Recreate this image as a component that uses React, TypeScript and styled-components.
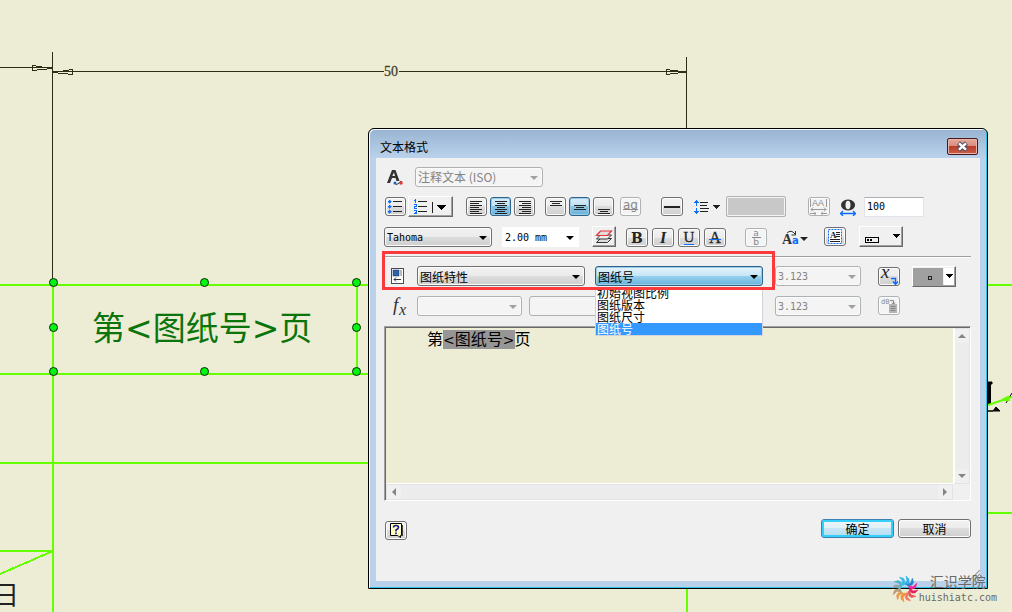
import React from "react";
import styled, { createGlobalStyle, css } from "styled-components";

const cjk = '"Noto Sans CJK SC", sans-serif';
const mono = '"DejaVu Sans Mono", "Noto Sans CJK SC", monospace';
const bracketed = '"DejaVu Sans", "Noto Sans CJK SC", sans-serif';

const GlobalStyle = createGlobalStyle`
  *, *::before, *::after { box-sizing: border-box; }
  body { margin: 0; background: #ededd6; font-family: ${cjk}; font-size: 12px; color: #000; }
  button, input, select { margin: 0; font: inherit; color: inherit; }
`;

const Workspace = styled.main`
  position: relative;
  min-height: 100vh;
  overflow: hidden;
`;

const Sheet = styled.svg`
  position: absolute;
  inset: 0;
  width: 100%;
  height: 100%;
`;

const Dialog = styled.section`
  position: absolute;
  top: 128px;
  left: 368px;
  right: 24px;
  min-width: 620px;
  padding: 0 6px 6px;
  border: 1px solid #000;
  border-radius: 6px 6px 0 0;
  outline: 0;
  background: linear-gradient(#98b4d2 0, #b9d1ea 28px, #b9d1ea 100%);
  box-shadow: inset 1px 1px 0 #f4f9fd, inset -1px -1px 0 #2ec4e8;
`;

const TitleBar = styled.header`
  display: flex;
  justify-content: space-between;
  align-items: flex-start;
  height: 29px;
  padding: 9px 3px 0 5px;
`;

const Title = styled.h1`
  margin: 0;
  font-size: 12px;
  line-height: 17px;
  font-weight: 400;
`;

const CloseButton = styled.button`
  display: grid;
  place-items: center;
  width: 31px;
  height: 17px;
  padding: 0;
  border: 1px solid #47191b;
  border-radius: 2px;
  background: linear-gradient(#e6a99b 0, #d98d7e 45%, #b93d27 50%, #c8604a 100%);
  box-shadow: inset 0 0 0 1px #e9b5aa;
`;

const Body = styled.div`
  display: flex;
  flex-direction: column;
  gap: 9px;
  margin: 0 1px 1px;
  padding: 8px 9px 41px 8px;
  background: #f0f0f0;
`;

const Row = styled.div<{ $align?: string }>`
  position: relative;
  display: flex;
  align-items: ${(p) => p.$align ?? "center"};
  height: 21px;
`;

const Group = styled.div<{ $before?: number; $gap?: number }>`
  display: flex;
  flex: none;
  align-items: center;
  gap: ${(p) => p.$gap ?? 3}px;
  margin-left: ${(p) => p.$before ?? 0}px;
`;

const Slot = styled.span`
  display: flex;
  width: 16px;
`;

const ToolButton = styled.button<{ $wide?: boolean }>`
  display: grid;
  place-items: center;
  width: ${(p) => (p.$wide ? 22 : 21)}px;
  height: 19px;
  padding: 0;
  border: 1px solid #707070;
  border-radius: 3px;
  background: linear-gradient(#f2f2f2 0, #ebebeb 50%, #dddddd 50%, #cfcfcf 100%);
  box-shadow: inset 0 0 0 1px #fcfcfc;
  svg { display: block; }
  &[aria-pressed="true"] {
    border-color: #2c628b;
    background: linear-gradient(#d9edf8 0, #bee0f2 50%, #8ac4e2 50%, #6cb3dc 100%);
    box-shadow: inset 0 0 0 1px #9ccbe4;
  }
  &:disabled {
    border-color: #adb2b5;
    background: #f4f4f4;
    color: #8c8c8c;
  }
`;

const RaisedButton = styled.button<{ $w: number }>`
  display: grid;
  place-items: center;
  width: ${(p) => p.$w}px;
  height: 21px;
  padding: 0;
  border: 1px solid;
  border-color: #fff #696969 #696969 #fff;
  background: #f0f0f0;
  box-shadow: inset -1px -1px 0 #a0a0a0;
  svg { display: block; }
`;

const PlainButton = styled.button`
  display: block;
  padding: 0;
  border: 0;
  background: none;
  svg { display: block; }
`;

type Tone = "normal" | "active" | "white";

const tones = {
  normal: css`
    border-color: #707070;
    background: linear-gradient(#f2f2f2 0, #ebebeb 50%, #dddddd 50%, #cfcfcf 100%);
    box-shadow: inset 0 0 0 1px #fcfcfc;
  `,
  active: css`
    border-color: #2c628b;
    background: linear-gradient(#e5f4fc 0, #c4e5f6 50%, #98d1ef 50%, #68b3db 100%);
    box-shadow: inset 0 0 0 1px #9ccbe4;
  `,
  white: css`
    border-color: #fff;
    border-radius: 0;
    background: #fff;
  `,
};

const Picker = styled.span<{ $w: number; $off?: boolean }>`
  position: relative;
  display: block;
  width: ${(p) => p.$w}px;
  &::after {
    content: "";
    position: absolute;
    top: 9px;
    right: 5px;
    border: 4px solid transparent;
    border-top-color: ${(p) => (p.$off ? "#a0a0a0" : "#000")};
    border-bottom: 0;
    pointer-events: none;
  }
`;

const Select = styled.select<{ $tone: Tone; $mono?: boolean }>`
  display: block;
  width: 100%;
  height: 20px;
  padding: 0 14px 0 2px;
  border: 1px solid;
  border-radius: 3px;
  appearance: none;
  ${(p) => tones[p.$tone]}
  font-family: ${(p) => (p.$mono ? mono : cjk)};
  font-size: ${(p) => (p.$mono ? 10 : 12)}px;
  &:disabled {
    border-color: #adb2b5;
    background: #f4f4f4;
    box-shadow: inset 0 0 0 1px #fbfbfb;
    color: #838383;
    opacity: 1;
  }
`;

const TextInput = styled.input<{ $w: number }>`
  width: ${(p) => p.$w}px;
  height: 20px;
  padding: 0 2px;
  border: 1px solid #e2e3ea;
  border-top-color: #abadb3;
  background: #fff;
  font-family: ${mono};
  font-size: 10px;
  &:disabled {
    border-color: #adb2b5;
    border-radius: 3px;
    background: #f4f4f4;
  }
`;

const ColorSwatch = styled.button`
  width: 60px;
  height: 21px;
  padding: 0;
  border: 1px solid #adb2b5;
  border-radius: 2px;
  background: #c8c8c8;
  box-shadow: inset 0 0 0 1px #f4f4f4;
`;

const Divider = styled.hr`
  width: 100%;
  height: 1px;
  margin: 0;
  border: 0;
  background: #a0a0a0;
  box-shadow: 0 1px 0 #fff;
`;

const Highlight = styled.div`
  position: absolute;
  z-index: 3;
  top: -15px;
  left: -2px;
  width: 393px;
  height: 39px;
  border: 3px solid #fc3a3c;
  pointer-events: none;
`;

const OptionList = styled.ul`
  position: absolute;
  z-index: 2;
  top: 21px;
  left: 0;
  right: 0;
  margin: 0;
  padding: 0;
  border: 1px solid #d3d3dc;
  border-top: 0;
  background: #fff;
  list-style: none;
`;

const Option = styled.li`
  height: 12px;
  padding-left: 1px;
  overflow: hidden;
  line-height: 12px;
  &[aria-selected="true"] { background: #3399ff; color: #fff; }
`;

const Editor = styled.div`
  display: grid;
  grid-template-columns: 1fr 17px;
  grid-template-rows: 156px 16px;
  border: 1px solid;
  border-color: #a0a0a0 #fff #fff #a0a0a0;
  box-shadow: inset 1px 1px 0 #696969;
  padding: 1px 0 0 1px;
  background: #f0f0f0;
`;

const EditorText = styled.div`
  padding: 1px 0 0 41px;
  border: 0;
  border-bottom: 1px solid #fff;
  background: #ededd6;
  font-family: ${bracketed};
  font-size: 16px;
  line-height: 21px;
  white-space: nowrap;
  outline: 0;
`;

const Marked = styled.mark`
  display: inline-block;
  height: 19px;
  line-height: 19px;
  vertical-align: top;
  margin-top: 1px;
  background: #969696;
  color: #000;
`;

const Bracket = styled.span`
  font-size: 14px;
`;

const ScrollBar = styled.div<{ $flow: "row" | "column" }>`
  display: flex;
  flex-direction: ${(p) => p.$flow};
  justify-content: space-between;
  border: 1px solid #e3e3e6;
  background: #ececec;
  ${(p) => (p.$flow === "column" ? "border-left: 2px solid #fff;" : "")}
`;

const ScrollButton = styled.button`
  display: grid;
  place-items: center;
  width: 14px;
  height: 14px;
  padding: 0;
  border: 0;
  background: #f0f0f0;
`;

const Footer = styled.footer`
  display: flex;
  gap: 4px;
  padding-top: 9px;
`;

const HelpSpace = styled.div`
  flex: 1;
  padding: 2px 0 0 1px;
`;

const PushButton = styled.button<{ $main?: boolean }>`
  width: 73px;
  height: 19px;
  padding: 0;
  border: 1px solid #707070;
  border-radius: 3px;
  line-height: 15px;
  background: linear-gradient(#f2f2f2 0, #ebebeb 50%, #dddddd 50%, #cfcfcf 100%);
  box-shadow: inset 0 0 0 1px #fcfcfc;
  ${(p) =>
    p.$main &&
    css`
      border-color: #3c7fb1;
      background: linear-gradient(#eff6fa 0, #e0f0f8 50%, #c8e6f5 50%, #b0dcf2 100%);
      box-shadow: inset 0 0 0 2px #35d0fa;
    `}
`;

const Grip = styled.svg`
  position: absolute;
  right: 7px;
  bottom: 7px;
`;

const Watermark = styled.aside`
  position: absolute;
  top: 572px;
  right: 15px;
  display: flex;
  align-items: center;
  color: #696968;
`;

const WatermarkText = styled.div`
  display: flex;
  flex-direction: column;
  align-items: center;
  font-size: 14px;
  line-height: 19px;
  small { font-family: ${mono}; font-size: 10px; line-height: 14px; }
`;

type Bar = [x1: number, x2: number, y: number];

function Bars({ bars, size = 17, color = "#222" }: { bars: Bar[]; size?: number; color?: string }) {
  return (
    <svg width={size} height="16" viewBox={`0 0 ${size} 16`} shapeRendering="crispEdges" aria-hidden="true">
      {bars.map(([a, b, y]) => (
        <rect key={y} x={a} y={y} width={b - a} height="1" fill={color} />
      ))}
    </svg>
  );
}

const leftBars: Bar[] = [[2, 14, 2], [2, 11, 4], [2, 14, 6], [2, 11, 8], [2, 14, 10], [2, 11, 12], [2, 14, 14]];
const centerBars: Bar[] = [[3, 15, 2], [5, 13, 4], [3, 15, 6], [5, 13, 8], [3, 15, 10], [5, 13, 12], [3, 15, 14]];
const rightBars: Bar[] = [[3, 15, 2], [6, 15, 4], [3, 15, 6], [6, 15, 8], [3, 15, 10], [6, 15, 12], [3, 15, 14]];

function Arrow({ d, fill = "#858585" }: { d: string; fill?: string }) {
  return (
    <svg width="8" height="8" viewBox="0 0 8 8" aria-hidden="true">
      <path d={d} fill={fill} />
    </svg>
  );
}

interface PickerFieldProps {
  label: string;
  value: string;
  w: number;
  tone?: Tone;
  monoText?: boolean;
  disabled?: boolean;
  children?: React.ReactNode;
}

function PickerField({ label, value, w, tone = "normal", monoText, disabled, children }: PickerFieldProps) {
  return (
    <Picker $w={w} $off={disabled}>
      <Select aria-label={label} defaultValue={value} $tone={tone} $mono={monoText} disabled={disabled}>
        <option value={value}>{value}</option>
      </Select>
      {children}
    </Picker>
  );
}

const grips: [number, number][] = [
  [53, 282], [204, 282], [356, 282],
  [53, 327], [356, 327],
  [53, 371], [204, 371], [356, 371],
];

function Drawing() {
  return (
    <Sheet aria-label="图纸">
      <g stroke="#2f2d18" fill="none" shapeRendering="crispEdges">
        <path d="M0 67.5H52M52.5 52V283M53 71.5H384M399 71.5H686M686.5 57V130" />
        <path d="M52 68.500L32.500 65.500V70.500ZM53 72.500L72.500 69.500V74.500ZM686 72L666.500 69.500V74.500Z" />
      </g>
      <text x="384" y="76" fontFamily='"Liberation Serif", serif' fontSize="14" fill="#45432c" stroke="#45432c" strokeWidth="0.3">50</text>
      <g stroke="#66ff00" strokeWidth="2" fill="none" shapeRendering="crispEdges">
        <path d="M0 285H369M988 285H3000M0 374H369M0 463H369M0 551H53M988 513H3000M53 283V3000M357 283V372M687 588V3000" />
        <path d="M0 574L53 551" />
        <path d="M205 326V331" />
      </g>
      <text x="92" y="340" fontFamily={bracketed} fontSize="33" fill="#0b740b">第&lt;图纸号&gt;页</text>
      <text x="-7" y="605" fontFamily={cjk} fontSize="26" fill="#222">日</text>
      {grips.map(([x, y]) => (
        <circle key={`${x}-${y}`} cx={x + 0.5} cy={y + 0.5} r="4" fill="#00f510" stroke="#10240c" />
      ))}
      <path d="M988 382h4v2h-1.500v20h-2.500ZM988 411h12l-4-4-3 4ZM1006 403l6-10" fill="#000" stroke="#000" />
      <path d="M988 405L1012 397M1002 400l6-3 1 3Z" stroke="#66ff00" strokeWidth="2" fill="#66ff00" />
    </Sheet>
  );
}

const petals = ["#2bb4e8", "#2186d2", "#f0289a", "#e61e63", "#ea4f55", "#f07a62", "#f58f39", "#e99a4b", "#b89b75", "#8fa5a0", "#4fb3c8", "#39b9e4"];

export default function App() {
  return (
    <>
      <GlobalStyle />
      <Workspace>
        <Drawing />

        <Dialog role="dialog" aria-labelledby="dialog-title">
          <TitleBar>
            <Title id="dialog-title">文本格式</Title>
            <CloseButton aria-label="关闭">
              <svg width="13" height="11" viewBox="0 0 13 11" aria-hidden="true">
                <path d="M2.500 2L10.500 9M10.500 2L2.500 9" stroke="#4d5568" strokeWidth="4.500" />
                <path d="M3 2.400L10 8.600M10 2.400L3 8.600" stroke="#fff" strokeWidth="2.400" />
              </svg>
            </CloseButton>
          </TitleBar>

          <Body>
            <Row>
              <Group $before={2} $gap={11}>
                <svg width="18" height="18" viewBox="0 0 18 18" aria-hidden="true">
                  <path d="M1 15L6 2h3.500l4 11h-3l-1-3H6l-2 5ZM6.300 8h2.700L8 4.500Z" fill="#333" fillRule="evenodd" />
                  <path d="M8 15q3 3 5 0t3-1" stroke="#333" fill="none" />
                  <circle cx="9" cy="15" r="1.500" fill="#1a62c4" />
                  <circle cx="15" cy="15" r="1.800" fill="#e53935" />
                </svg>
                <PickerField label="样式" value="注释文本 (ISO)" w={128} disabled />
              </Group>
            </Row>

            <Row>
              <Group $before={1} $gap={2}>
                <ToolButton aria-label="项目符号">
                  <svg width="17" height="15" viewBox="0 0 17 15" shapeRendering="crispEdges" aria-hidden="true">
                    <path d="M6 2.500h9M6 7.500h9M6 12.500h9" stroke="#222" />
                    <path d="M2 1h1v1h1v1h-1v1h-1v-1h-1v-1h1zM2 6h1v1h1v1h-1v1h-1v-1h-1v-1h1zM2 11h1v1h1v1h-1v1h-1v-1h-1v-1h1z" fill="#0a6cff" stroke="#0a6cff" strokeWidth=".5" />
                  </svg>
                </ToolButton>
                <RaisedButton $w={45} aria-label="编号">
                  <svg width="41" height="17" viewBox="0 0 41 17" shapeRendering="crispEdges" aria-hidden="true">
                    <path d="M8 3.500h9M8 8.500h9M8 13.500h9M22.500 4v11" stroke="#222" />
                    <path d="M5.500 1v4M4 2.500h1M4 6.500h2v2h-2v2h3M4 12.500h2v3h-2M5 14.500h1" stroke="#0a6cff" fill="none" />
                    <path d="M27 7h9l-4.500 5z" fill="#000" />
                  </svg>
                </RaisedButton>
              </Group>
              <Group $before={13}>
                <ToolButton aria-label="左对齐"><Bars bars={leftBars} /></ToolButton>
                <ToolButton aria-label="居中" aria-pressed="true"><Bars bars={centerBars} /></ToolButton>
                <ToolButton aria-label="右对齐"><Bars bars={rightBars} /></ToolButton>
              </Group>
              <Group $before={10}>
                <ToolButton aria-label="顶部对齐"><Bars bars={[[3, 15, 2], [5, 13, 4], [3, 15, 6]]} /></ToolButton>
                <ToolButton aria-label="中部对齐" aria-pressed="true"><Bars bars={[[3, 15, 6], [5, 13, 8], [3, 15, 10]]} /></ToolButton>
                <ToolButton aria-label="底部对齐"><Bars bars={[[3, 15, 10], [5, 13, 12], [3, 15, 14]]} /></ToolButton>
              </Group>
              <Group $before={6}>
                <ToolButton aria-label="基线" disabled>
                  <svg width="17" height="15" viewBox="0 0 17 15" aria-hidden="true">
                    <text x="1" y="10" fontFamily='"DejaVu Sans", sans-serif' fontSize="12" fill="#888">ag</text>
                    <path d="M1 10.500h15" stroke="#888" />
                  </svg>
                </ToolButton>
              </Group>
              <Group $before={20}>
                <ToolButton $wide aria-label="单行文本">
                  <svg width="18" height="15" viewBox="0 0 18 15" aria-hidden="true"><path d="M1 8h16" stroke="#222" strokeWidth="2" /></svg>
                </ToolButton>
              </Group>
              <Group $before={11}>
                <PlainButton aria-label="行距">
                  <svg width="26" height="16" viewBox="0 0 26 16" shapeRendering="crispEdges" aria-hidden="true">
                    <path d="M6 3.500h8M6 6.500h7M6 9.500h9M6 12.500h8" stroke="#222" />
                    <path d="M2.500 3v4M2.500 9v4" stroke="#0a6cff" />
                    <path d="M0 4L2.500 1L5 4zM0 12L2.500 15L5 12z" fill="#0a6cff" />
                    <path d="M18 6h8l-4 4z" fill="#222" />
                  </svg>
                </PlainButton>
              </Group>
              <Group $before={6}>
                <ColorSwatch aria-label="颜色" />
              </Group>
              <Group $before={22}>
                <ToolButton $wide aria-label="字符间距" disabled>
                  <svg width="20" height="17" viewBox="0 0 20 17" aria-hidden="true">
                    <text x="3" y="8" fontFamily='"Liberation Sans", sans-serif' fontSize="9" fill="#888">AA</text>
                    <path d="M1.500 1v8M17.500 1v8M2 11.500h15M4 9.500l-2 2 2 2M15 9.500l2 2-2 2M1 15.500h6M12 15.500h6M6 14v3M13 14v3" stroke="#999" fill="none" />
                  </svg>
                </ToolButton>
              </Group>
              <Group $before={10} $gap={8}>
                <svg width="16" height="18" viewBox="0 0 16 18" aria-hidden="true">
                  <path d="M8 1.500a7 5.500 0 1 0 .1 0ZM8 2.800c1.800 0 2.500 1.700 2.500 4.200s-.7 4.200-2.500 4.200-2.500-1.700-2.500-4.200.7-4.200 2.500-4.200Z" fill="#333" fillRule="evenodd" />
                  <path d="M1 15.500h14M3 13l-2.500 2.500 2.500 2.500M13 13l2.500 2.500-2.500 2.500" stroke="#0a6cff" fill="none" strokeWidth="1.300" />
                </svg>
                <TextInput $w={60} aria-label="拉伸幅度" defaultValue="100" />
              </Group>
            </Row>

            <Row $align="flex-end">
              <Group $gap={10}>
                <PickerField label="字体" value="Tahoma" w={108} monoText />
                <PickerField label="大小" value="2.00 mm" w={77} tone="white" monoText />
              </Group>
              <Group $before={13}>
                <RaisedButton $w={24} aria-label="图层">
                  <svg width="20" height="17" viewBox="0 0 20 17" aria-hidden="true">
                    <path d="M2.500 14.500l4-4h11l-4 4z" fill="#ddd" stroke="#333" />
                    <path d="M2.500 11l4-4h11l-4 4z" fill="#eee" stroke="#333" />
                    <path d="M2.500 7.500l4-4.500h11l-4 4.500z" fill="#e4dcdc" stroke="#e0333a" strokeWidth="1.200" />
                  </svg>
                </RaisedButton>
              </Group>
              <Group $before={10} $gap={4}>
                <ToolButton $wide aria-label="粗体">
                  <svg width="18" height="16" viewBox="0 0 18 16" aria-hidden="true"><text x="9" y="13" textAnchor="middle" fontFamily='"DejaVu Serif", serif' fontWeight="700" fontSize="14" fill="#222">B</text></svg>
                </ToolButton>
                <ToolButton $wide aria-label="斜体">
                  <svg width="18" height="16" viewBox="0 0 18 16" aria-hidden="true"><text x="9" y="13" textAnchor="middle" fontFamily='"Liberation Serif", serif' fontWeight="700" fontStyle="italic" fontSize="16" fill="#222">I</text></svg>
                </ToolButton>
                <ToolButton $wide aria-label="下划线">
                  <svg width="18" height="16" viewBox="0 0 18 16" aria-hidden="true">
                    <text x="9" y="12" textAnchor="middle" fontFamily='"Liberation Serif", serif' fontSize="15" fill="#222" stroke="#222" strokeWidth=".3">U</text>
                    <path d="M4 14.500h10" stroke="#0a6cff" />
                  </svg>
                </ToolButton>
                <ToolButton $wide aria-label="删除线">
                  <svg width="18" height="16" viewBox="0 0 18 16" aria-hidden="true">
                    <text x="9" y="13" textAnchor="middle" fontFamily='"Liberation Serif", serif' fontSize="16" fill="#222" stroke="#222" strokeWidth=".3">A</text>
                    <path d="M3 9.500h12" stroke="#0a6cff" />
                  </svg>
                </ToolButton>
              </Group>
              <Group $before={19}>
                <ToolButton $wide aria-label="堆叠" disabled>
                  <svg width="18" height="17" viewBox="0 0 18 17" aria-hidden="true">
                    <text x="9" y="7" textAnchor="middle" fontFamily='"DejaVu Sans", sans-serif' fontSize="9" fill="#888">a</text>
                    <text x="9" y="16" textAnchor="middle" fontFamily='"DejaVu Sans", sans-serif' fontSize="9" fill="#888">b</text>
                    <path d="M5 8.500h9" stroke="#888" />
                  </svg>
                </ToolButton>
              </Group>
              <Group $before={15}>
                <PlainButton aria-label="大小写">
                  <svg width="27" height="18" viewBox="0 0 27 18" aria-hidden="true">
                    <text x="0" y="15" fontFamily='"Liberation Serif", serif' fontWeight="700" fontSize="14" fill="#333">A</text>
                    <text x="10" y="15" fontFamily='"DejaVu Sans", sans-serif' fontWeight="700" fontSize="10" fill="#0a6cff">a</text>
                    <path d="M5 4q4-4 8 1M13.500 2v4h-4" stroke="#333" fill="none" />
                    <path d="M18 8h8l-4 4z" fill="#222" />
                  </svg>
                </PlainButton>
              </Group>
              <Group $before={15} $gap={13}>
                <ToolButton $wide aria-label="文本框">
                  <svg width="18" height="17" viewBox="0 0 18 17" aria-hidden="true">
                    <rect x="2.500" y="1.500" width="13" height="14" fill="#fff" stroke="#0a6cff" strokeDasharray="2 1" />
                    <text x="4" y="10" fontFamily='"Liberation Serif", serif' fontWeight="700" fontSize="9" fill="#222">A</text>
                    <path d="M10 4.500h4M10 6.500h4M10 8.500h4M4 11.500h10M4 13.500h10" stroke="#222" />
                  </svg>
                </ToolButton>
                <RaisedButton $w={44} aria-label="符号">
                  <svg width="40" height="17" viewBox="0 0 40 17" shapeRendering="crispEdges" aria-hidden="true">
                    <path d="M4.500 9.500h13v5h-13z" fill="none" stroke="#000" />
                    <path d="M6 11h2v2h-2zM9 11h2v2h-2z" />
                    <path d="M31 6h8l-4 4z" />
                  </svg>
                </RaisedButton>
              </Group>
            </Row>

            <Divider />

            <Row $align="flex-start">
              <Highlight />
              <Group $before={7} $gap={10}>
                <Slot>
                  <svg width="13" height="16" viewBox="0 0 13 16" aria-hidden="true">
                    <rect x=".5" y=".5" width="12" height="15" fill="#fff" stroke="#454b57" />
                    <rect x="2" y="2" width="6" height="6" fill="#2b64a8" stroke="#222f55" strokeWidth=".5" />
                    <path d="M9 2h2v6h-2z" fill="#b5bbc5" />
                    <path d="M3 11.500h7M5 9.500l-2 2 2 2" stroke="#333" fill="none" />
                  </svg>
                </Slot>
                <PickerField label="类型" value="图纸特性" w={168} />
                <PickerField label="特性" value="图纸号" w={168} tone="active">
                  <OptionList role="listbox" aria-label="特性选项">
                    {["初始视图比例", "图纸版本", "图纸尺寸", "图纸号"].map((name) => (
                      <Option key={name} role="option" aria-selected={name === "图纸号"}>{name}</Option>
                    ))}
                  </OptionList>
                </PickerField>
              </Group>
              <Group $before={12}>
                <PickerField label="精度" value="3.123" w={86} monoText disabled />
              </Group>
              <Group $before={17} $gap={12}>
                <ToolButton $wide aria-label="添加文本参数">
                  <svg width="20" height="18" viewBox="0 0 20 18" aria-hidden="true">
                    <text x="2" y="10" fontFamily='"Liberation Serif", serif' fontStyle="italic" fontSize="19" fill="#222">x</text>
                    <path d="M12 10.500h4.500v5M14 13.500l2.500 3 2.500-3" stroke="#0a6cff" strokeWidth="1.400" fill="none" />
                  </svg>
                </ToolButton>
                <RaisedButton $w={44} aria-label="插入符号">
                  <svg width="42" height="19" viewBox="0 0 42 19" shapeRendering="crispEdges" aria-hidden="true">
                    <path d="M0 1h30v17h-30z" fill="#a0a0a0" />
                    <path d="M31 1h10v17h-10z" fill="#fff" />
                    <rect x="15.500" y="9.500" width="3" height="3" fill="none" stroke="#222" />
                    <path d="M33 7h7l-3.500 4z" />
                  </svg>
                </RaisedButton>
              </Group>
            </Row>

            <Row $align="flex-start">
              <Group $before={7} $gap={10}>
                <Slot>
                  <svg width="16" height="19" viewBox="0 0 16 19" aria-hidden="true">
                    <text x="2" y="14" fontFamily='"Liberation Serif", serif' fontStyle="italic" fontSize="19" fill="#333">f</text>
                    <text x="8" y="18" fontFamily='"Liberation Serif", serif' fontStyle="italic" fontSize="16" fill="#333">x</text>
                  </svg>
                </Slot>
                <PickerField label="零部件" value="" w={105} disabled />
              </Group>
              <Group $before={7} $gap={12}>
                <TextInput $w={234} aria-label="参数" disabled />
                <PickerField label="参数精度" value="3.123" w={86} monoText disabled />
              </Group>
              <Group $before={17}>
                <ToolButton $wide aria-label="添加参数" disabled>
                  <svg width="20" height="17" viewBox="0 0 20 17" aria-hidden="true">
                    <text x="2" y="7" fontFamily='"DejaVu Sans Mono", monospace' fontSize="7" fill="#888">d0</text>
                    <path d="M11 3.500h3.500v4M13 5.500l1.500 2 1.500-2" stroke="#888" fill="none" />
                    <path d="M10 7h8v9h-8z" fill="#b5b5b5" />
                    <path d="M11.500 9.500h5M11.500 11.500h5M11.500 13.500h5" stroke="#888" />
                  </svg>
                </ToolButton>
              </Group>
            </Row>

            <Editor>
              <EditorText role="textbox" aria-label="文本" contentEditable suppressContentEditableWarning spellCheck={false}>
                第<Marked><Bracket>&lt;</Bracket>图纸号<Bracket>&gt;</Bracket></Marked>页
              </EditorText>
              <ScrollBar $flow="column">
                <ScrollButton aria-label="向上滚动"><Arrow d="M0 6L4 2L8 6Z" /></ScrollButton>
                <ScrollButton aria-label="向下滚动"><Arrow d="M0 2L4 6L8 2Z" /></ScrollButton>
              </ScrollBar>
              <ScrollBar $flow="row">
                <ScrollButton aria-label="向左滚动"><Arrow d="M6 0L2 4L6 8Z" /></ScrollButton>
                <ScrollButton aria-label="向右滚动"><Arrow d="M2 0L6 4L2 8Z" /></ScrollButton>
              </ScrollBar>
            </Editor>

            <Footer>
              <HelpSpace>
                <ToolButton $wide aria-label="帮助">
                  <svg width="18" height="17" viewBox="0 0 18 17" aria-hidden="true">
                    <path d="M3.500 1.500h11v12h-1v2l-3-2h-7Z" fill="#ffffc4" stroke="#000" />
                    <path d="M15.500 3v11" stroke="#444" />
                    <path d="M6.500 5.500q0-2 2.500-2t2.500 2q0 1.300-2.500 2.500v1.500M9 10.500v1.700" stroke="#14148c" strokeWidth="1.600" fill="none" />
                  </svg>
                </ToolButton>
              </HelpSpace>
              <PushButton $main>确定</PushButton>
              <PushButton>取消</PushButton>
            </Footer>
          </Body>
          <Grip width="11" height="11" viewBox="0 0 11 11" aria-hidden="true">
            <path d="M0 11L11 0M4 11L11 4M8 11L11 8" stroke="#999" strokeWidth="1.200" />
          </Grip>
        </Dialog>

        <Watermark>
          <svg width="28" height="30" viewBox="-14 -15 28 30" aria-hidden="true">
            {petals.map((color, i) => (
              <path key={color} d="M-1-5L2-8L1-13L4-10L4-7L1-4Z" fill={color} stroke={color} strokeWidth=".6" transform={`rotate(${i * 30})`} />
            ))}
          </svg>
          <WatermarkText>
            汇识学院
            <small>huishiatc.com</small>
          </WatermarkText>
        </Watermark>
      </Workspace>
    </>
  );
}
